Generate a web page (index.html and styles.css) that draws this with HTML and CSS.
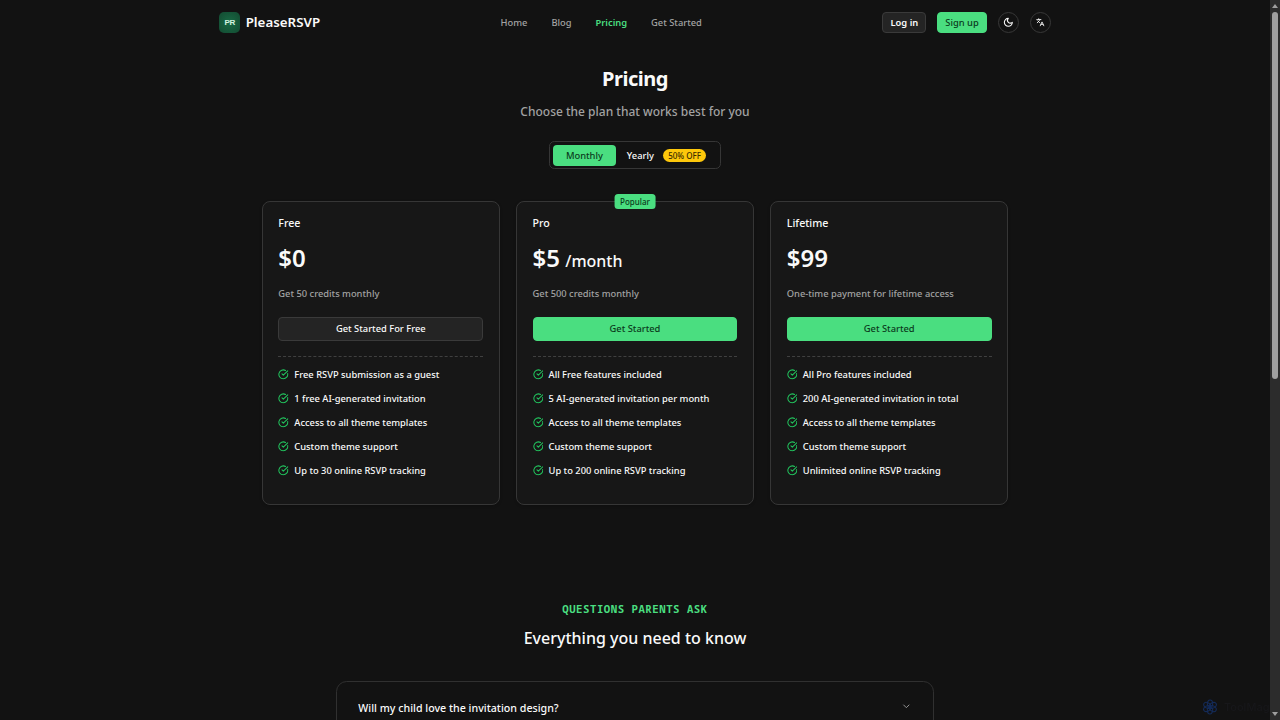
FILE: index.html
```html
<!DOCTYPE html>
<html lang="en">
<head>
<meta charset="utf-8">
<title>Pricing - PleaseRSVP</title>
<link rel="stylesheet" href="styles.css">
</head>
<body>
<svg class="defs" width="0" height="0" aria-hidden="true">
  <symbol id="check" viewBox="0 0 24 24"><path d="M21.8 10A10 10 0 1 1 17 3.34"/><path d="m9 11 3 3L22 4"/></symbol>
</svg>
<div class="page">
  <header class="header">
    <div class="brand"><span class="logo">PR</span><span class="brand-name">PleaseRSVP</span></div>
    <nav class="nav"><a>Home</a><a>Blog</a><a class="active">Pricing</a><a>Get Started</a></nav>
    <div class="actions">
      <a class="btn outline login">Log in</a>
      <a class="btn primary signup">Sign up</a>
      <a class="round"><svg class="moon" viewBox="0 0 24 24"><path d="M12 3a6 6 0 0 0 9 9 9 9 0 1 1-9-9Z"/></svg></a>
      <a class="round"><svg class="lang" viewBox="0 0 24 24"><path d="m3.500 13.500 5.500-5.500 2-3.500M2 4.500h12M7.500 2v2.500M5 8l5.500 5.500M12 22l5-11 5 11M14 18h6"/></svg></a>
    </div>
  </header>
  <main>
    <section class="intro">
      <h1>Pricing</h1>
      <p class="subtitle">Choose the plan that works best for you</p>
      <div class="toggle"><span class="option selected">Monthly</span><span class="option yearly">Yearly<span class="off">50% OFF</span></span></div>
    </section>
    <section class="plans">
      <article class="card">
        <h2>Free</h2>
        <div class="price">$0</div>
        <p class="credits">Get 50 credits monthly</p>
        <a class="btn outline wide">Get Started For Free</a>
        <ul>
          <li><svg><use href="#check"/></svg>Free RSVP submission as a guest</li>
          <li><svg><use href="#check"/></svg>1 free AI-generated invitation</li>
          <li><svg><use href="#check"/></svg>Access to all theme templates</li>
          <li><svg><use href="#check"/></svg>Custom theme support</li>
          <li><svg><use href="#check"/></svg>Up to 30 online RSVP tracking</li>
        </ul>
      </article>
      <article class="card">
        <span class="popular">Popular</span>
        <h2>Pro</h2>
        <div class="price">$5 <span class="per">/month</span></div>
        <p class="credits">Get 500 credits monthly</p>
        <a class="btn primary wide">Get Started</a>
        <ul>
          <li><svg><use href="#check"/></svg>All Free features included</li>
          <li><svg><use href="#check"/></svg>5 AI-generated invitation per month</li>
          <li><svg><use href="#check"/></svg>Access to all theme templates</li>
          <li><svg><use href="#check"/></svg>Custom theme support</li>
          <li><svg><use href="#check"/></svg>Up to 200 online RSVP tracking</li>
        </ul>
      </article>
      <article class="card">
        <h2>Lifetime</h2>
        <div class="price">$99</div>
        <p class="credits">One-time payment for lifetime access</p>
        <a class="btn primary wide">Get Started</a>
        <ul>
          <li><svg><use href="#check"/></svg>All Pro features included</li>
          <li><svg><use href="#check"/></svg>200 AI-generated invitation in total</li>
          <li><svg><use href="#check"/></svg>Access to all theme templates</li>
          <li><svg><use href="#check"/></svg>Custom theme support</li>
          <li><svg><use href="#check"/></svg>Unlimited online RSVP tracking</li>
        </ul>
      </article>
    </section>
    <section class="faq">
      <p class="eyebrow">QUESTIONS PARENTS ASK</p>
      <h2 class="faq-title">Everything you need to know</h2>
      <div class="faq-box">
        <div class="question"><span>Will my child love the invitation design?</span><svg class="chevron" viewBox="0 0 24 24"><path d="m6 9 6 6 6-6"/></svg></div>
      </div>
    </section>
  </main>
</div>
<div class="watermark">
  <svg viewBox="0 0 24 24"><ellipse cx="12" cy="7" rx="4" ry="5.500"/><ellipse cx="12" cy="7" rx="4" ry="5.500" transform="rotate(60 12 12)"/><ellipse cx="12" cy="7" rx="4" ry="5.500" transform="rotate(120 12 12)"/><ellipse cx="12" cy="7" rx="4" ry="5.500" transform="rotate(180 12 12)"/><ellipse cx="12" cy="7" rx="4" ry="5.500" transform="rotate(240 12 12)"/><ellipse cx="12" cy="7" rx="4" ry="5.500" transform="rotate(300 12 12)"/></svg>
  <span>ToolMage</span>
</div>
<div class="scrollbar"><i class="arrow up"></i><i class="thumb"></i><i class="arrow down"></i></div>
</body>
</html>
```

FILE: styles.css
```css
* { box-sizing: border-box; }
html, body { height: 720px; overflow: hidden; }
body { margin: 0; background: #121212; color: #fafafa; font: 500 9.333px/13.333px "Noto Sans", sans-serif; }
h1, h2, p, ul { margin: 0; padding: 0; }
svg { fill: none; stroke: currentColor; stroke-width: 2; stroke-linecap: round; stroke-linejoin: round; flex: none; }
.defs { position: absolute; }
.page { width: 1270px; height: 720px; overflow: hidden; }
.header { width: 832px; height: 45.333px; margin: 0 auto; display: flex; align-items: center; justify-content: space-between; }
.brand { display: flex; align-items: center; gap: 5.333px; }
.logo { width: 21.333px; height: 21.333px; border-radius: 5px; background: radial-gradient(circle, #196a45, #134a31); display: grid; place-items: center; font: 700 8px/1 "Liberation Sans", sans-serif; letter-spacing: -.3px; color: #d3f3e0; }
.brand-name { font-size: 13.333px; line-height: 18px; font-weight: 600; position: relative; top: -.5px; }
.nav { display: flex; gap: 24px; color: #a2a2a2; }
.nav .active { color: #4ade80; font-weight: 600; }
.actions { display: flex; align-items: center; gap: 10.667px; }
.btn { display: flex; align-items: center; justify-content: center; border-radius: 4px; border: 1px solid #3a3a3a; height: 21.333px; }
.outline { background: #242424; }
.primary { background: #4ade80; border-color: #4ade80; color: #0b3b1d; }
.login { width: 44px; font-weight: 600; }
.signup { width: 50px; }
.round { width: 21.333px; height: 21.333px; border: 1px solid #383838; border-radius: 50%; display: grid; place-items: center; }
.moon { width: 10.667px; height: 10.667px; stroke-width: 2.400; }
.lang { width: 8.500px; height: 8.500px; stroke-width: 2.400; }
.intro { display: flex; flex-direction: column; align-items: center; padding-top: 21.333px; }
h1 { font-size: 20px; line-height: 24px; font-weight: 700; letter-spacing: -.5px; }
.subtitle { margin-top: 12px; font-size: 12px; line-height: 18px; color: #a2a2a2; }
.toggle { margin-top: 20.333px; width: 172px; height: 28.500px; border: 1px solid #363636; border-radius: 5.333px; padding: 2.667px; display: flex; }
.option { display: flex; align-items: center; justify-content: center; }
.selected { width: 63.500px; background: #4ade80; color: #0b3b1d; border-radius: 4px; }
.yearly { padding-left: 10.667px; gap: 9px; }
.off { height: 13px; padding: 0 5.333px; border-radius: 7px; background: #fdc70b; color: #3a2c00; font-size: 8px; line-height: 13px; }
.plans { width: 746.667px; margin: 32px auto 0; display: grid; grid-template-columns: repeat(3, 1fr); gap: 16px; }
.card { position: relative; height: 303.700px; border: 1px solid #363636; border-radius: 8px; background: #171717; padding: 15px 15.667px; box-shadow: 0 1px 3px #0003; }
.card h2 { font-size: 10.667px; line-height: 12px; font-weight: 500; }
.price { margin-top: 12.300px; height: 32px; font-size: 24px; line-height: 32px; font-weight: 600; }
.per { font-size: 16px; font-weight: 500; margin-left: -1px; }
.credits { margin-top: 13px; color: #a2a2a2; }
.wide { margin-top: 16.400px; height: 24px; }
.card ul { margin-top: 15.700px; border-top: 1px dashed #404040; padding-top: 10.400px; list-style: none; display: grid; gap: 10.667px; }
.card li { display: flex; align-items: center; gap: 5.333px; }
.card li svg { width: 10.667px; height: 10.667px; color: #22c55e; stroke-width: 2.300; }
.popular { position: absolute; top: -8px; left: 50%; transform: translateX(-50%); height: 15px; padding: 0 5.500px; border-radius: 3.500px; background: #4ade80; color: #0b3b1d; font-size: 8px; line-height: 15px; }
.faq { width: 597.333px; margin: 96.300px auto 0; text-align: center; }
.eyebrow { font: 700 10.667px/16px "Noto Sans Mono", "DejaVu Sans Mono", monospace; letter-spacing: .533px; color: #4ade80; }
.faq-title { margin-top: 8.700px; font-size: 16px; line-height: 24px; font-weight: 500; }
.faq-box { margin-top: 31.100px; height: 100px; border: 1px solid #303030; border-radius: 10.667px; padding: 18px 21px; }
.question { display: flex; justify-content: space-between; font-size: 10.667px; line-height: 16px; }
.chevron { width: 10.667px; height: 10.667px; margin-top: 1px; color: #a2a2a2; }
.watermark { position: fixed; left: 1202px; top: 699px; display: flex; align-items: center; gap: 6px; font: 500 11px/16px Inter, sans-serif; color: #17171a; }
.watermark svg { width: 16px; height: 16px; color: #142b58; stroke-width: 1.600; }
.scrollbar { position: fixed; right: 0; top: 0; width: 10px; height: 720px; background: #2c2c2c; display: flex; flex-direction: column; align-items: center; padding: 4px 0; }
.arrow { border: 3px solid transparent; border-top-width: 0; border-bottom: 4px solid #9f9f9f; }
.down { margin-top: auto; transform: rotate(180deg); }
.thumb { width: 6px; height: 367px; margin-top: 4px; border-radius: 3px; background: #9f9f9f; }
```
